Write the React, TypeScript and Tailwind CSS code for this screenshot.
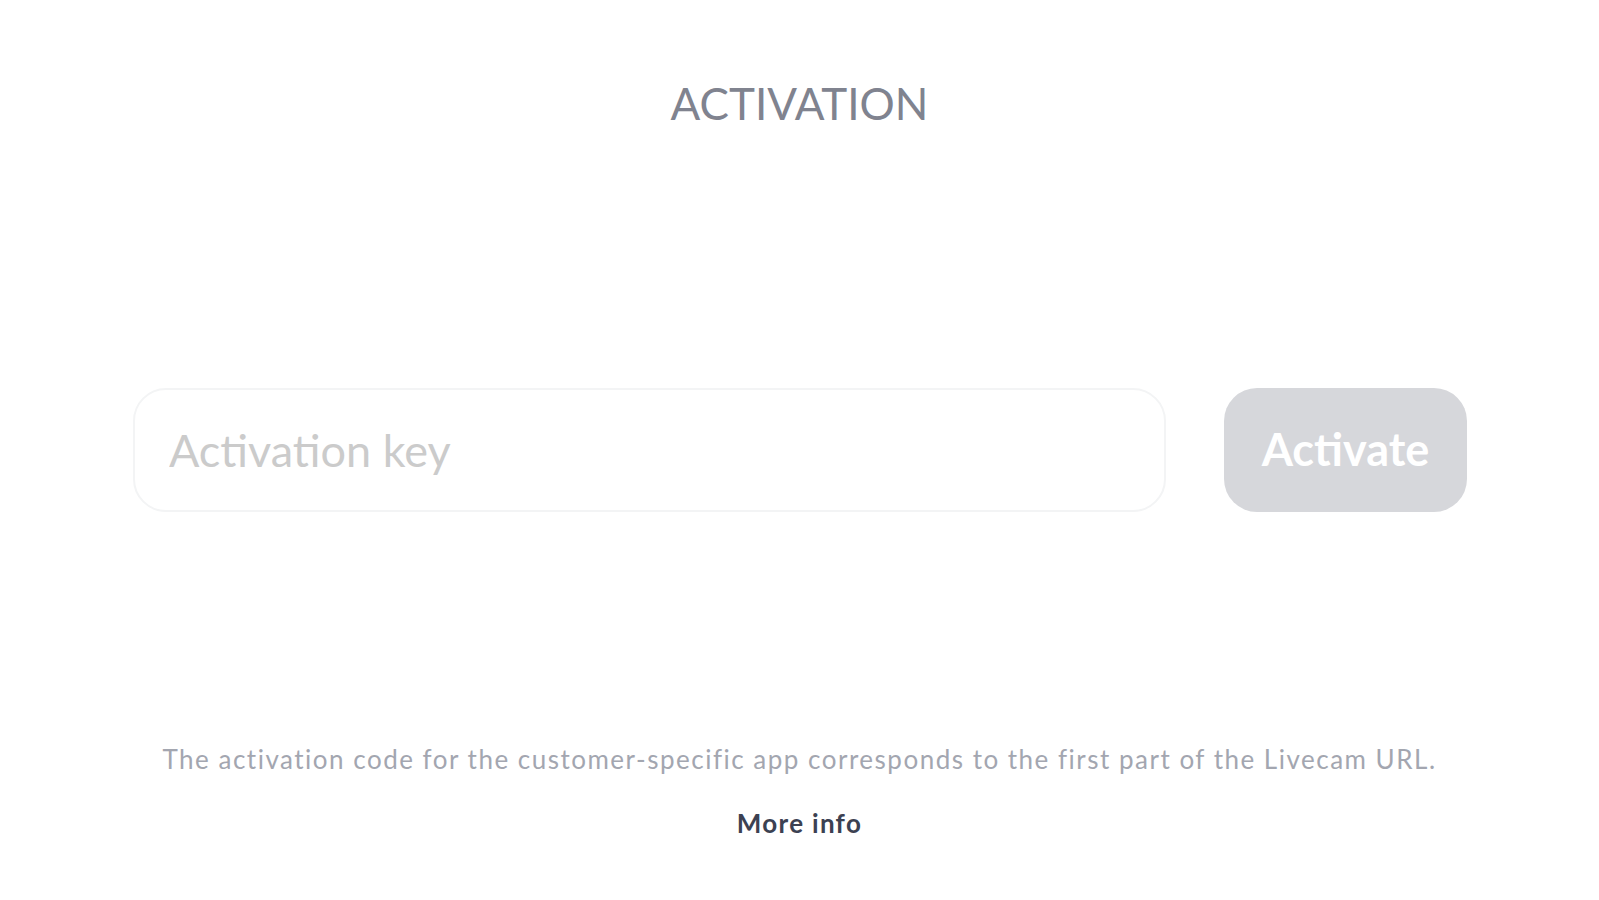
import React from "react";

export default function App() {
  return (
    <div
      className="w-full h-[900px] overflow-hidden bg-white flex flex-col items-center"
      style={{ fontFamily: "Lato, 'Noto Sans', sans-serif" }}
    >
      <h1 className="mt-[74px] text-[44px] leading-[58px] font-normal text-[#80838f]">
        ACTIVATION
      </h1>
      <div className="mt-[256px] w-full pl-[133px] pr-[132px] flex items-center gap-[58px]">
        <input
          placeholder="Activation key"
          className="flex-1 min-w-0 h-[124px] rounded-[33px] border-2 border-[#f3f4f5] px-[34px] text-[45px] text-[#333] placeholder:text-[#cbcbcb] outline-none"
        />
        <button className="w-[243px] h-[124px] rounded-[33px] bg-[#d6d7db] text-white text-[45px] font-bold">
          Activate
        </button>
      </div>
      <p className="mt-[231px] text-[26px] leading-[32px] tracking-[1.5px] text-[#a3a6b0] whitespace-nowrap">
        The activation code for the customer-specific app corresponds to the first part of the Livecam URL.
      </p>
      <a className="mt-[32px] text-[26px] leading-[32px] tracking-[1.3px] font-bold text-[#3c4152]">More info</a>
    </div>
  );
}
